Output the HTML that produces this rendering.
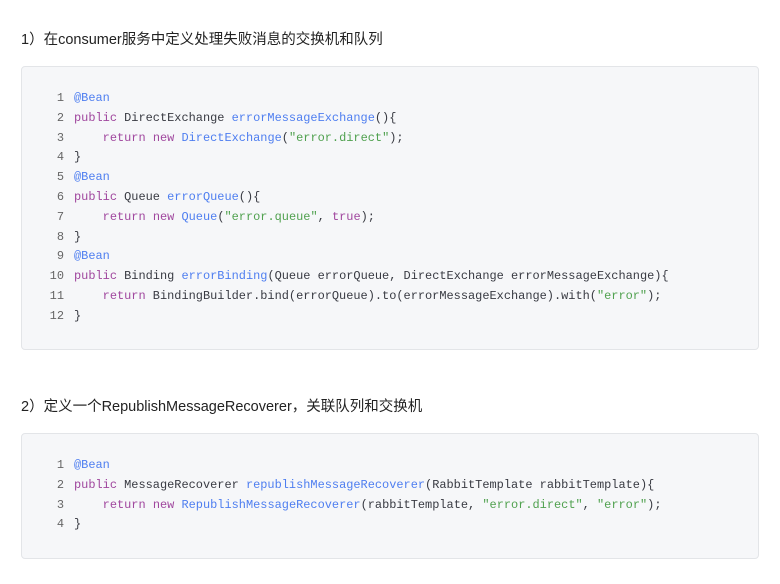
<!DOCTYPE html>
<html><head><meta charset="utf-8"><style>
body{margin:0;width:780px;height:584px;background:#fff;font-family:"Liberation Sans","Noto Sans CJK SC",sans-serif;color:#222;overflow:hidden;position:relative}
.h{position:absolute;left:21px;font-size:14.5px;line-height:20px}
.blk{position:absolute;left:21px;width:736px;background:#f6f7f9;border:1px solid #e3e5e8;border-radius:4px}
pre{margin:0;position:absolute;left:0;font-family:"Liberation Mono",monospace;font-size:11.95px;line-height:19.8px;color:#383a42}
.n{display:inline-block;width:42px;text-align:right;color:#666;margin-right:10px}
.k{color:#a0479e}.f{color:#4e7ef0}.s{color:#50a14f}
</style></head><body>
<div class="h" style="top:30px">1）在consumer服务中定义处理失败消息的交换机和队列</div>
<div class="blk" style="top:66px;height:282px">
<pre style="top:22px"><span class="n">1</span><span class="f">@Bean</span>
<span class="n">2</span><span class="k">public</span> DirectExchange <span class="f">errorMessageExchange</span>(){
<span class="n">3</span>    <span class="k">return</span> <span class="k">new</span> <span class="f">DirectExchange</span>(<span class="s">"error.direct"</span>);
<span class="n">4</span>}
<span class="n">5</span><span class="f">@Bean</span>
<span class="n">6</span><span class="k">public</span> Queue <span class="f">errorQueue</span>(){
<span class="n">7</span>    <span class="k">return</span> <span class="k">new</span> <span class="f">Queue</span>(<span class="s">"error.queue"</span>, <span class="k">true</span>);
<span class="n">8</span>}
<span class="n">9</span><span class="f">@Bean</span>
<span class="n">10</span><span class="k">public</span> Binding <span class="f">errorBinding</span>(Queue errorQueue, DirectExchange errorMessageExchange){
<span class="n">11</span>    <span class="k">return</span> BindingBuilder.bind(errorQueue).to(errorMessageExchange).with(<span class="s">"error"</span>);
<span class="n">12</span>}</pre></div>
<div class="h" style="top:397px">2）定义一个RepublishMessageRecoverer，关联队列和交换机</div>
<div class="blk" style="top:433px;height:124px">
<pre style="top:22px"><span class="n">1</span><span class="f">@Bean</span>
<span class="n">2</span><span class="k">public</span> MessageRecoverer <span class="f">republishMessageRecoverer</span>(RabbitTemplate rabbitTemplate){
<span class="n">3</span>    <span class="k">return</span> <span class="k">new</span> <span class="f">RepublishMessageRecoverer</span>(rabbitTemplate, <span class="s">"error.direct"</span>, <span class="s">"error"</span>);
<span class="n">4</span>}</pre></div>
</body></html>
